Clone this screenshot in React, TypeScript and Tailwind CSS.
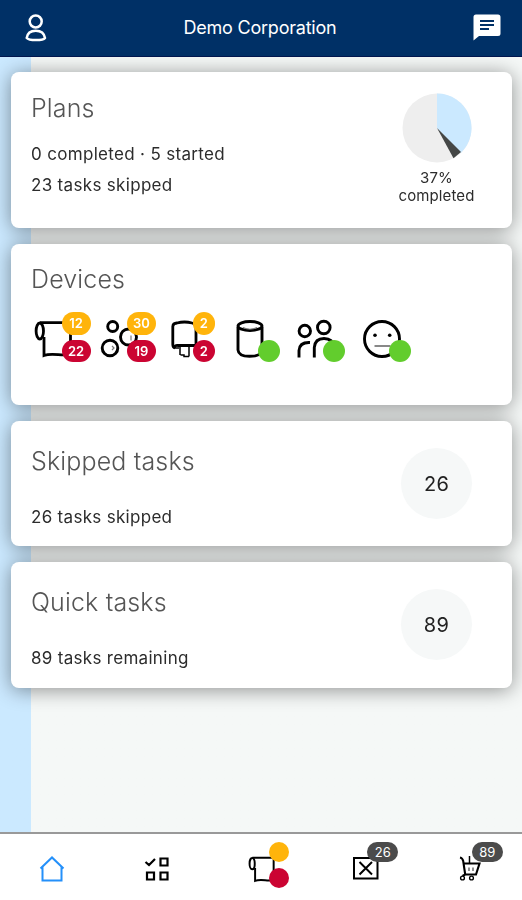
import type { ReactNode } from "react";

const RollIcon = ({ className = "", strokeWidth = 2.8 }: { className?: string; strokeWidth?: number }) => (
  <svg viewBox="0 0 44 40" className={`overflow-visible ${className}`} fill="none" stroke="black" strokeWidth={strokeWidth}>
    <ellipse cx="5.8" cy="11" rx="3.7" ry="8" />
    <path d="M6 2.6H36.5V34C29 37 19 32 10 35.5V17" />
  </svg>
);

const NapkinIcon = () => (
  <svg viewBox="0 0 44 40" className="w-11 h-10 overflow-visible" fill="none" stroke="black" strokeWidth="2.9">
    <circle cx="12.7" cy="6.5" r="5" />
    <circle cx="28.5" cy="17" r="8" />
    <circle cx="10" cy="28" r="7.8" />
    <path d="M12 26l2 2-2 2M31 15.5v5" strokeWidth="1.2" stroke="#777" />
  </svg>
);

const TowelIcon = () => (
  <svg viewBox="0 0 44 40" className="w-11 h-10 overflow-visible" fill="none" stroke="black" strokeWidth="2.8">
    <path d="M10 28Q7.8 27.5 7.8 24.5V6.5Q8 3.2 12 3Q19.5 1 27 3Q31 4 31 9V25.5H13Q9.5 25 9.5 28" />
    <path d="M9 28H14M15 27V35M24 26V36.5M15.5 35h3.5v1.5h5" strokeWidth="1.5" />
  </svg>
);

const BinIcon = () => (
  <svg viewBox="0 0 44 40" className="w-11 h-10 overflow-visible" fill="none" stroke="black" strokeWidth="2.9">
    <path d="M7 7V30Q7.5 36.3 18.5 36.3Q30.5 36.3 31 30V7" />
    <ellipse cx="19" cy="6" rx="12" ry="4.5" />
    <path d="M12 7.5Q19 11 26 7.5" strokeWidth="1.2" stroke="#777" />
  </svg>
);

const PeopleIcon = () => (
  <svg viewBox="0 0 44 40" className="w-11 h-10 overflow-visible" fill="none" stroke="black" strokeWidth="2.9">
    <circle cx="8.8" cy="11" r="5.7" />
    <circle cx="27.8" cy="7.5" r="6.3" />
    <path d="M3 37.5V30.5Q3.5 22 14 22.5M18.3 37.5V27.5Q19 18.5 28 18.5Q37 18.5 38 27.5" />
  </svg>
);

const FaceIcon = () => (
  <svg viewBox="0 0 44 40" className="w-11 h-10 overflow-visible" fill="none" stroke="black" strokeWidth="2.9">
    <circle cx="20" cy="19" r="17.5" />
    <path d="M12.5 26H28.5" stroke="#888" strokeWidth="2" />
    <circle cx="13" cy="15.3" r="1.8" fill="black" stroke="none" />
    <circle cx="27.7" cy="15.3" r="1.8" fill="black" stroke="none" />
  </svg>
);

const devices = [
  { icon: <RollIcon className="w-11 h-10" />, warn: 12, alert: 22 },
  { icon: <NapkinIcon />, warn: 30, alert: 19 },
  { icon: <TowelIcon />, warn: 2, alert: 2 },
  { icon: <BinIcon /> },
  { icon: <PeopleIcon /> },
  { icon: <FaceIcon /> },
];

const Card = ({ title, className, children }: { title: string; className: string; children: ReactNode }) => (
  <section className={`relative bg-white rounded-lg pl-5 ${className}`}>
    <h2 className="text-[25px] leading-8 font-light tracking-[0.15px] text-[#555]">{title}</h2>
    {children}
  </section>
);

const CountCircle = ({ value }: { value: number }) => (
  <div className="absolute right-10 top-[27px] size-[71px] rounded-full bg-[#f6f8f8] flex items-center justify-center text-xl tracking-[0.3px] text-[#222]">
    {value}
  </div>
);

const NavCount = ({ value }: { value: number }) => (
  <span className="absolute left-[15px] top-[-14px] w-[31px] h-5 rounded-full bg-[#4b4b4b] text-white text-[13px] leading-5 text-center">
    {value}
  </span>
);

export default function App() {
  return (
    <div className="w-[522px] h-[900px] flex flex-col overflow-hidden bg-[#f5f8f7] font-[Inter,sans-serif] text-[#2c2c2c]">
      <header className="h-[57px] shrink-0 bg-[#003066] border-b border-[#00164f] flex items-center justify-between pl-[25px] pr-[21px] pb-px">
        <svg viewBox="0 0 22 28" className="w-[22px] h-7" fill="none" stroke="white" strokeWidth="2.5">
          <circle cx="10.7" cy="7.5" r="6" />
          <path d="M1.7 24C2.5 18 6 16.7 10.8 16.7S19 18 20 24C18 26.8 4 26.8 1.7 24Z" strokeLinejoin="round" />
        </svg>
        <h1 className="text-white text-lg leading-7 font-normal tracking-[-0.22px]">Demo Corporation</h1>
        <svg viewBox="0 0 28 27" className="w-7 h-[27px]">
          <path d="M3 0.5H25Q27.5 0.5 27.5 3V19.5Q27.5 22 25 22H6L0.5 26.5V3Q0.5 0.5 3 0.5Z" fill="white" />
          <path d="M7 7H21M7 11H21M7 15H16" stroke="#003066" strokeWidth="2" />
        </svg>
      </header>

      <main className="flex-1 bg-linear-to-r from-[#cbe9ff] from-[31px] to-[#f5f8f7] to-[31px] pl-[11px] pr-[10px] pt-[15px]">
        <div className="flex flex-col gap-4 drop-shadow-[0_2px_10px_rgba(0,0,0,0.42)]">
          <Card title="Plans" className="h-[156px] pt-5">
            <div className="mt-[15px] text-[17px] leading-[31px] tracking-[0.32px]">
              <p>0 completed · 5 started</p>
              <p>23 tasks skipped</p>
            </div>
            <div className="absolute right-[25.5px] top-[21px] w-[100px] flex flex-col items-center text-[15px] leading-[18px] text-center">
              <svg viewBox="0 0 70 70" className="size-[70px] mb-1.5">
                <circle cx="35" cy="35" r="34.5" fill="#eee" />
                <path d="M35 35V0.5A34.5 34.5 0 0 1 58.8 60Z" fill="#cbe9ff" />
                <path d="M35 35L59 59L51.5 65.3Z" fill="#444746" />
              </svg>
              <p className="tracking-[0.1px]">37%<br />completed</p>
            </div>
          </Card>

          <Card title="Devices" className="h-[161px] pt-[19px]">
            <div className="mt-[25px] flex gap-[21.5px]">
              {devices.map(({ icon, warn, alert }, i) => (
                <div key={i} className="relative w-11 h-10 pl-[3px]">
                  {icon}
                  {alert ? (
                    <div className="absolute left-[30.5px] top-[-8px] flex flex-col gap-[5px] text-white text-[13px] leading-[22px] font-semibold text-center">
                      <span className={warn && warn > 9 ? "w-[29px] h-[22.5px] rounded-full bg-[#ffb40b]" : "size-[22.5px] rounded-full bg-[#ffb40b]"}>{warn}</span>
                      <span className={alert > 9 ? "w-[29px] h-[22.5px] rounded-full bg-[#cb0432]" : "size-[22.5px] rounded-full bg-[#cb0432]"}>{alert}</span>
                    </div>
                  ) : (
                    <span className="absolute left-[30px] top-[19.5px] size-[22px] rounded-full bg-[#62cd2d]" />
                  )}
                </div>
              ))}
            </div>
          </Card>

          <Card title="Skipped tasks" className="h-[125px] pt-6">
            <p className="mt-7 text-[17px] leading-6 tracking-[0.3px]">26 tasks skipped</p>
            <CountCircle value={26} />
          </Card>

          <Card title="Quick tasks" className="h-[126px] pt-6">
            <p className="mt-7 text-[17px] leading-6 tracking-[0.3px]">89 tasks remaining</p>
            <CountCircle value={89} />
          </Card>
        </div>
      </main>

      <nav className="relative h-[68px] shrink-0 bg-white border-t-2 border-[#999] flex items-center justify-around pt-1">
        <svg viewBox="0 0 26 26" className="size-[26px]" fill="none" stroke="#2490fa" strokeWidth="2">
          <path d="M1.5 12.5L13 1.5L24.5 12.5M3.5 11V24.5H22.5V11" />
        </svg>
        <svg viewBox="0 0 26 26" className="size-[26px]" fill="none" stroke="black" strokeWidth="2.2">
          <path d="M1.5 6L5 9L11 3M16.5 2.5h7v7h-7ZM3 16.5h7v7h-7ZM16.5 16.5h7v7h-7Z" />
        </svg>
        <div className="relative size-[26px]">
          <RollIcon className="w-[31px] h-7" strokeWidth={2.8} />
          <span className="absolute left-[21px] top-[-14px] size-5 rounded-full bg-[#ffb40b]" />
          <span className="absolute left-[21px] top-[12px] size-5 rounded-full bg-[#cb0432]" />
        </div>
        <div className="relative size-[26px]">
          <svg viewBox="0 0 26 26" className="size-[26px] overflow-visible" fill="none" stroke="black" strokeWidth="2">
            <path d="M2 2H25.5V22.5H2ZM7.5 6L20 18.5M20 6L7.5 18.5" />
          </svg>
          <NavCount value={26} />
        </div>
        <div className="relative size-[26px]">
          <svg viewBox="0 0 26 26" className="size-[26px] overflow-visible" fill="none" stroke="black" strokeWidth="2.1">
            <path d="M3 1.5Q5.5 2 6.2 5L8.2 18.5H19L22.5 7.5H6.5M5.5 20L8.2 18.5" />
            <path d="M12.5 0V7.5" strokeWidth="1.5" />
            <path d="M12 11.5v3.5M16 11.5v3.5" strokeWidth="1.3" stroke="#555" />
            <circle cx="5.5" cy="22" r="1.9" strokeWidth="1.4" />
            <circle cx="14.5" cy="22" r="1.9" strokeWidth="1.4" />
          </svg>
          <NavCount value={89} />
        </div>
      </nav>
    </div>
  );
}
